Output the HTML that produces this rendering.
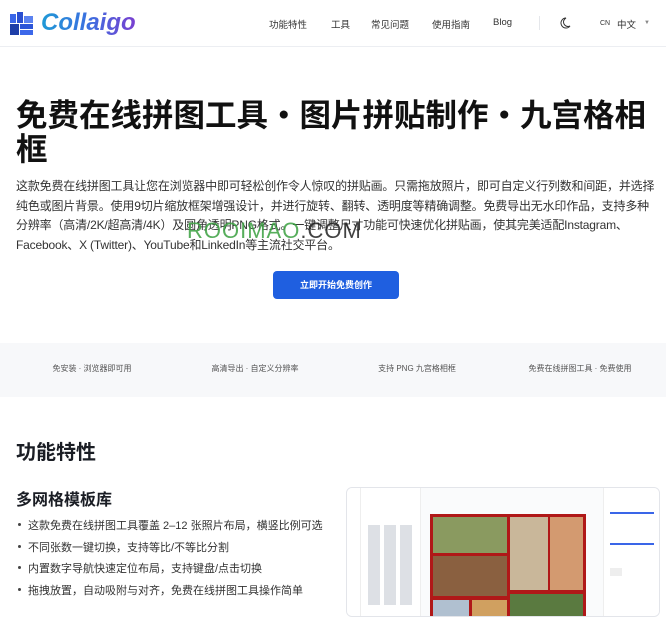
<!DOCTYPE html>
<html><head><meta charset="utf-8"><style>
*{margin:0;padding:0;box-sizing:border-box}
body{width:666px;height:606px;overflow:hidden;background:#fff;font-family:"Liberation Sans","Noto Sans CJK SC",sans-serif;color:#1a1d24;position:relative}
.hdr{position:absolute;left:0;top:0;width:666px;height:47px;border-bottom:1px solid #eceef2}
.nav{position:absolute;top:17px;font-size:9.5px;color:#333}
h1{position:absolute;left:16px;top:98px;width:650px;font-size:31.5px;line-height:34px;font-weight:700;color:#111}
.p{position:absolute;left:16px;top:177px;width:660px;font-size:12px;letter-spacing:-0.18px;line-height:19.7px;color:#333}
.btn{position:absolute;left:273px;top:271px;width:126px;height:28px;background:#1f5fe0;border-radius:4px;color:#fff;font-size:9px;font-weight:700;text-align:center;line-height:28px}
.band{position:absolute;left:0;top:343px;width:666px;height:54px;background:#f7f8fa}
.band span{position:absolute;top:20px;font-size:8px;color:#555;transform:translateX(-50%);white-space:nowrap}
h2{position:absolute;left:16px;top:436px;font-size:20px;font-weight:700}
h3{position:absolute;left:16px;top:486px;font-size:16px;font-weight:700}
ul{position:absolute;left:16px;top:517px;list-style:none;font-size:11px;color:#333}
li{height:21.5px;padding-left:12px;position:relative}
li:before{content:"";position:absolute;left:2px;top:6px;width:3px;height:3px;border-radius:50%;background:#444}
.shot{position:absolute;left:346px;top:487px;width:314px;height:130px;border:1px solid #e3e5ea;border-radius:6px;background:#fafbfc;overflow:hidden}
</style></head><body>
<div class="hdr">
<svg style="position:absolute;left:10px;top:12px" width="23" height="23" viewBox="0 0 23 23">
<rect x="0" y="2" width="6" height="9" fill="#3a66e8"/><rect x="7" y="0" width="6" height="11" fill="#2a4fd0"/><rect x="14" y="4" width="9" height="7" fill="#5b82f0"/>
<rect x="0" y="12" width="9" height="11" fill="#1e3ea8"/><rect x="10" y="12" width="13" height="5" fill="#2c55d8"/><rect x="10" y="18" width="13" height="5" fill="#3c68ea"/></svg>
<div style="position:absolute;left:41px;top:9px;font-size:24px;font-weight:700;font-style:italic;background:linear-gradient(90deg,#1f9ad6,#3b6fe0 50%,#7a3fd0);-webkit-background-clip:text;color:transparent">Collaigo</div>
<span class="nav" style="left:269px">功能特性</span>
<span class="nav" style="left:331px">工具</span>
<span class="nav" style="left:371px">常见问题</span>
<span class="nav" style="left:432px">使用指南</span>
<span class="nav" style="left:493px">Blog</span>
<div style="position:absolute;left:539px;top:16px;width:1px;height:14px;background:#e5e7eb"></div>
<svg style="position:absolute;left:560px;top:17px" width="11" height="12" viewBox="0 0 11 12"><path d="M6 1A5 5 0 1 0 10 9A4 4 0 0 1 6 1Z" fill="none" stroke="#333" stroke-width="1"/></svg>
<span class="nav" style="left:600px;font-size:7px;top:20px">CN</span><span class="nav" style="left:617px">中文</span><span class="nav" style="left:644px;font-size:6px;top:20px;color:#888">▼</span>
</div>
<h1>免费在线拼图工具・图片拼贴制作・九宫格相框</h1>
<div class="p">这款免费在线拼图工具让您在浏览器中即可轻松创作令人惊叹的拼贴画。只需拖放照片，即可自定义行列数和间距，并选择<br>纯色或图片背景。使用9切片缩放框架增强设计，并进行旋转、翻转、透明度等精确调整。免费导出无水印作品，支持多种<br>分辨率（高清/2K/超高清/4K）及圆角透明PNG格式。一键调整尺寸功能可快速优化拼贴画，使其完美适配Instagram、<br>Facebook、X (Twitter)、YouTube和LinkedIn等主流社交平台。</div>
<div style="position:absolute;left:187px;top:218px;font-size:22px;color:#3aa040;letter-spacing:1px;opacity:.85">ROOIMAO<span style="color:#222">.COM</span></div>
<div class="btn">立即开始免费创作</div>
<div class="band"><span style="left:92px">免安装 · 浏览器即可用</span><span style="left:255px">高清导出 · 自定义分辨率</span><span style="left:417px">支持 PNG 九宫格相框</span><span style="left:580px">免费在线拼图工具 · 免费使用</span></div>
<h2>功能特性</h2>
<h3>多网格模板库</h3>
<ul><li>这款免费在线拼图工具覆盖 2–12 张照片布局，横竖比例可选</li><li>不同张数一键切换，支持等比/不等比分割</li><li>内置数字导航快速定位布局，支持键盘/点击切换</li><li>拖拽放置，自动吸附与对齐，免费在线拼图工具操作简单</li></ul>
<div class="shot">
<div style="position:absolute;left:0;top:0;width:14px;height:130px;border-right:1px solid #eee;background:#fff"></div>
<div style="position:absolute;left:14px;top:0;width:60px;height:130px;border-right:1px solid #eee;background:#fff">
<div style="position:absolute;left:7px;top:37px;width:46px;height:80px;background:repeating-linear-gradient(90deg,#dde0e5 0 12px,#fff 12px 16px)"></div></div>
<div style="position:absolute;right:0;top:0;width:56px;height:130px;border-left:1px solid #eee;background:#fff">
<div style="position:absolute;left:6px;top:24px;width:44px;height:2px;background:#3a66e8"></div>
<div style="position:absolute;left:6px;top:55px;width:44px;height:2px;background:#3a66e8"></div>
<div style="position:absolute;left:6px;top:80px;width:12px;height:8px;background:#eee"></div></div>
<div style="position:absolute;left:83px;top:26px;width:156px;height:110px;background:#b01818;padding:2px">
<div style="position:absolute;left:3px;top:3px;width:74px;height:36px;background:#8a9a60"></div>
<div style="position:absolute;left:80px;top:3px;width:38px;height:73px;background:#c9b79a"></div>
<div style="position:absolute;left:120px;top:3px;width:33px;height:73px;background:#d39a70"></div>
<div style="position:absolute;left:3px;top:42px;width:74px;height:40px;background:#8a6040"></div>
<div style="position:absolute;left:3px;top:86px;width:36px;height:30px;background:#b0c0d0"></div>
<div style="position:absolute;left:42px;top:86px;width:35px;height:30px;background:#d0a060"></div>
<div style="position:absolute;left:80px;top:80px;width:73px;height:30px;background:#5a7a40"></div>
</div></div>
</body></html>
